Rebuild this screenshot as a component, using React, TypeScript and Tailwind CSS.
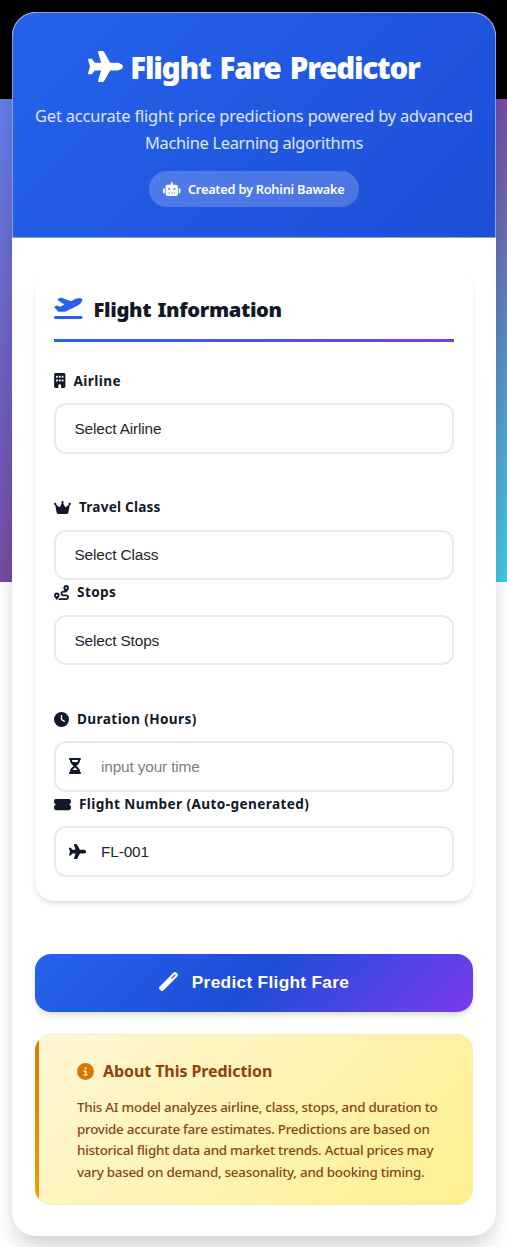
import type { ReactNode } from "react";
import {
  FaBuilding,
  FaCircleInfo,
  FaClock,
  FaCrown,
  FaHourglassHalf,
  FaPlane,
  FaPlaneDeparture,
  FaRobot,
  FaRoute,
  FaTicketSimple,
  FaWandMagic,
} from "react-icons/fa6";

function Label({ icon, children }: { icon: ReactNode; children: ReactNode }) {
  return (
    <div className="mb-[9.7px] flex h-[25px] items-center whitespace-nowrap text-[13.6px] font-bold tracking-[0.4px]">
      {icon}
      {children}
    </div>
  );
}

function SelectBox({ children }: { children: ReactNode }) {
  return (
    <div className="flex h-[50.5px] items-center rounded-xl border-2 border-[#e9eaed] bg-white pl-[18.5px] font-['Liberation_Sans',sans-serif] text-[15.4px] tracking-[-0.15px] text-[#1f2530]">
      {children}
    </div>
  );
}

function InputBox({ icon, value, muted }: { icon: ReactNode; value: string; muted?: boolean }) {
  return (
    <div className="flex h-[50.5px] items-center rounded-xl border-2 border-[#e9eaed] bg-white pl-[13px] font-['Liberation_Sans',sans-serif] text-[15.4px] tracking-[-0.15px]">
      <span className="flex w-[32px] items-center">{icon}</span>
      <span className={muted ? "text-[#808080]" : "text-[#1f2530]"}>{value}</span>
    </div>
  );
}

export default function App() {
  return (
    <div className="h-[1247px] overflow-hidden bg-white bg-[linear-gradient(#000,#000),linear-gradient(135deg,#667eea_0%,#764ba2_50%,#43c9e2_100%)] bg-[length:100%_99px,100%_483px] bg-[position:0_0,0_99px] bg-no-repeat px-[12px] pt-[12px] pr-[11px] font-['Noto_Sans',sans-serif] text-[#111827]">
      <main className="h-[1224px] overflow-hidden rounded-[24px] bg-white shadow-[0_16px_24px_-5px_rgba(0,0,0,0.15),0_5px_20px_rgba(0,0,0,0.05)]">
        <header className="flex h-[226px] flex-col items-center rounded-t-[24px] border border-[#8a9fdd] bg-[linear-gradient(135deg,#2563eb,#1d4ed8)] pt-[34px] text-white">
          <h1 className="flex h-[42px] items-center whitespace-nowrap text-[29.5px] font-black tracking-[-1.2px] [word-spacing:2.7px]">
            <FaPlane className="-mt-[3px] mr-[7px] h-[31px] w-[35px]" />
            Flight Fare Predictor
          </h1>
          <p className="mt-[13px] whitespace-nowrap text-center text-[16.4px] leading-[27px] tracking-[-0.16px] text-white/85">
            Get accurate flight price predictions powered by advanced
            <br />
            <span className="tracking-[-0.3px]">Machine Learning algorithms</span>
          </p>
          <div className="mt-[15px] flex h-[36px] w-[210px] items-center justify-center whitespace-nowrap rounded-full bg-white/20 pt-px text-[12.8px] font-semibold tracking-[-0.25px]">
            <FaRobot className="mr-[7px] -mt-[2px] h-[14px] w-[17.5px]" />
            Created by Rohini Bawake
          </div>
        </header>

        <div className="px-[23px] pt-[32px]">
          <section className="h-[631px] rounded-[20px] bg-white px-[19px] pt-[19px] shadow-[0_4px_6px_-1px_rgba(0,0,0,0.1),0_2px_4px_-2px_rgba(0,0,0,0.1)]">
            <h2 className="flex h-[40px] items-center whitespace-nowrap text-[20.2px] font-black tracking-[-0.35px] [word-spacing:1.5px]">
              <FaPlaneDeparture className="mr-[11px] -mt-[4px] h-[23px] w-[28.5px] text-[#2563eb]" />
              Flight Information
            </h2>
            <div className="mt-[10px] h-[3px] bg-[linear-gradient(90deg,#2563eb,#7c3aed)]" />

            <div className="mt-[26.4px]">
              <Label icon={<FaBuilding className="mr-[8px] h-[15px] w-[11.5px]" />}>Airline</Label>
              <SelectBox>Select Airline</SelectBox>
            </div>
            <div className="mt-[41.4px]">
              <Label icon={<FaCrown className="mr-[8px] h-[15px] w-[17px]" />}>
                <span className="tracking-[0.2px]">Travel Class</span>
              </Label>
              <SelectBox>Select Class</SelectBox>
              <Label icon={<FaRoute className="mr-[8px] h-[15px] w-[15px]" />}>Stops</Label>
              <SelectBox>Select Stops</SelectBox>
            </div>
            <div className="mt-[41.2px]">
              <Label icon={<FaClock className="mr-[8px] h-[15px] w-[15px]" />}>Duration (Hours)</Label>
              <InputBox icon={<FaHourglassHalf className="h-[16px] w-[12px]" />} value="input your time" muted />
              <Label icon={<FaTicketSimple className="mr-[8px] h-[15px] w-[17px]" />}>
                Flight Number (Auto-generated)
              </Label>
              <InputBox icon={<FaPlane className="h-[15.4px] w-[17.3px]" />} value="FL-001" />
            </div>
          </section>

          <button className="mt-[53px] flex h-[58px] w-full items-center justify-center whitespace-nowrap rounded-[16px] bg-[linear-gradient(135deg,#2563eb_0%,#1d4ed8_50%,#7c3aed_100%)] font-['Liberation_Sans',sans-serif] text-[17.3px] font-bold tracking-[0.3px] text-white shadow-[0_4px_6px_-1px_rgba(0,0,0,0.15)]">
            <FaWandMagic className="mr-[14px] -mt-[3px] h-[19px] w-[19px]" />
            Predict Flight Fare
          </button>

          <section className="mt-[22px] flex h-[171px] overflow-hidden rounded-[16px] border border-l-0 border-[#f6ecb8] bg-[linear-gradient(135deg,#fef7d6,#fef08f)] text-[#92400e]">
            <div className="w-[4px] shrink-0 bg-[linear-gradient(180deg,#d97706,#f09c0b)]" />
            <div className="pt-[23px] pl-[38px]">
              <h3 className="flex h-[26px] items-center whitespace-nowrap text-[16px] font-bold tracking-[-0.08px]">
                <FaCircleInfo className="mr-[9px] h-[17px] w-[17px] text-[#d97706]" />
                About This Prediction
              </h3>
              <p className="mt-[13px] whitespace-nowrap text-[13.4px] leading-[21.7px] font-medium tracking-[-0.25px] text-[#8a4418]">
                This AI model analyzes airline, class, stops, and duration to
                <br />
                provide accurate fare estimates. Predictions are based on
                <br />
                historical flight data and market trends. Actual prices may
                <br />
                vary based on demand, seasonality, and booking timing.
              </p>
            </div>
          </section>
        </div>
      </main>
    </div>
  );
}
